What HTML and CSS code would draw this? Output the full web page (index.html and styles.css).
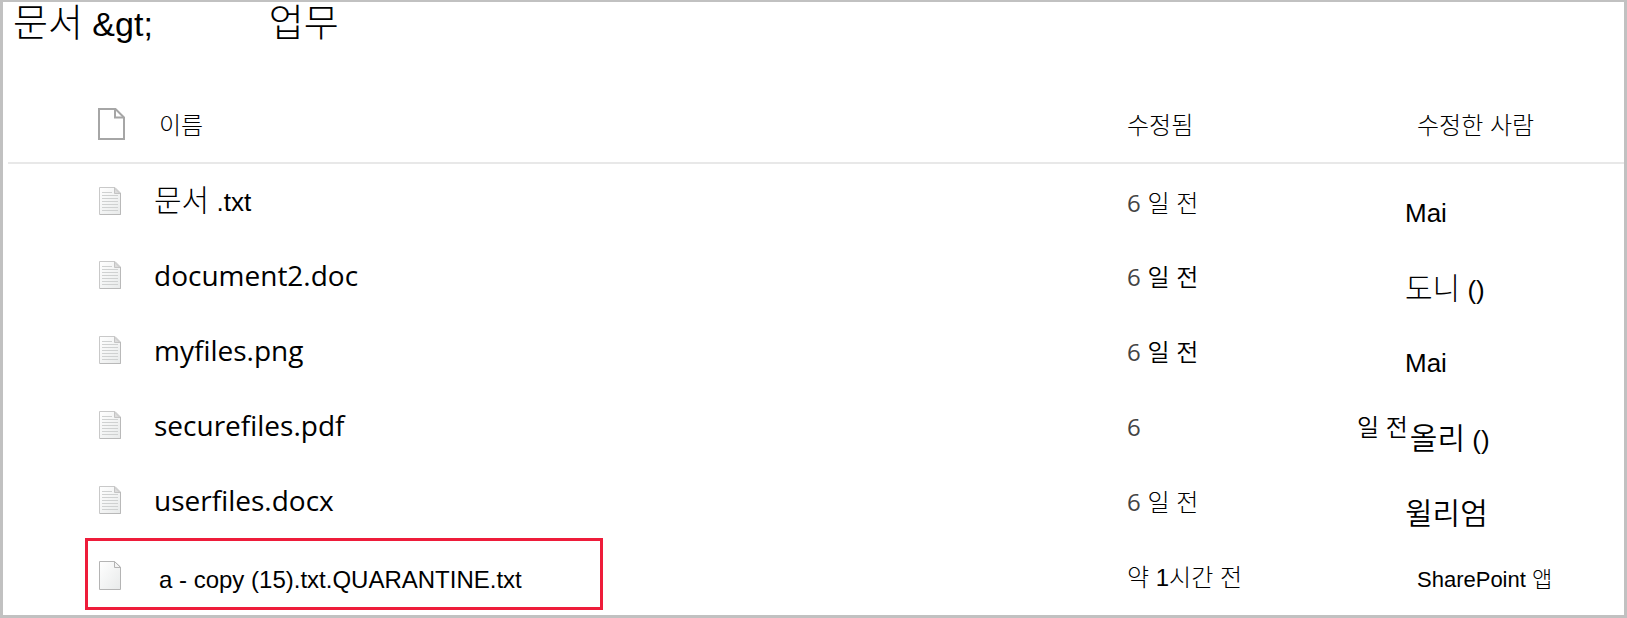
FILE: index.html
```
<!DOCTYPE html>
<html lang="ko">
<head>
    <meta charset="utf-8">
    <meta name="viewport" content="width=device-width, initial-scale=1.0">
    <title>문서</title>
    <link rel="stylesheet" href="styles.css">
</head>
<body>
    <!-- icons shared by the rows -->
    <svg class="sprite" aria-hidden="true">
        <defs>
            <linearGradient id="paper" x1="0" y1="0" x2="1" y2="1">
                <stop offset="0" stop-color="#ffffff"/>
                <stop offset="1" stop-color="#e8eaea"/>
            </linearGradient>
        </defs>
        <symbol id="text-file" viewBox="0 0 22 29">
            <path d="M.5 .5H16L21.500 6V27.500H.5Z" fill="url(#paper)" stroke="#c9c9c9"/>
            <path d="M1 27.500H21.500V6" fill="none" stroke="#b9b9b9"/>
            <path d="M15.500 1V6.500H21Z" fill="#dcdcdc" stroke="#c4c4c4"/>
            <path d="M3 5.500H13M3 8.500H19M3 11.500H19M3 14.500H19M3 17.500H19M3 20.500H19M3 23.500H19" stroke="#cfd1d1"/>
        </symbol>
        <symbol id="blank-file" viewBox="0 0 22 29">
            <path d="M.5 .5H15.500L21.500 6V28.500H.5Z" fill="url(#paper)" stroke="#b4b4b4"/>
            <path d="M15.500 .5V6.500H21.500Z" fill="#f4f4f4" stroke="#b4b4b4"/>
        </symbol>
    </svg>

    <main class="library">
        <h1 class="title"><span><span class="ko">문서</span> &amp;gt;</span><span class="ko">업무</span></h1>

        <table class="files">
            <thead>
                <tr>
                    <th class="icon" scope="col" aria-label="형식">
                        <svg class="type-icon" viewBox="0 0 27 32">
                            <path d="M1 1H17.500L26 9.500V31H1Z" fill="#fff" stroke="#a6a6a6" stroke-width="2"/>
                            <path d="M17 1.500V9.500H25.500" fill="none" stroke="#a6a6a6" stroke-width="2"/>
                        </svg>
                    </th>
                    <th class="name" scope="col">이름</th>
                    <th class="modified" scope="col">수정됨</th>
                    <th class="person" scope="col">수정한 사람</th>
                </tr>
            </thead>
            <tbody>
                <tr>
                    <td class="icon"><svg class="file-icon"><use href="#text-file"/></svg></td>
                    <td class="name"><a href="#"><span class="ko">문서</span> <span class="ext">.txt</span></a></td>
                    <td class="modified"><span class="count">6</span> 일 전</td>
                    <td class="person">Mai</td>
                </tr>
                <tr>
                    <td class="icon"><svg class="file-icon"><use href="#text-file"/></svg></td>
                    <td class="name"><a href="#">document2.doc</a></td>
                    <td class="modified strong"><span class="count">6</span> 일 전</td>
                    <td class="person"><span class="ko">도니</span> ()</td>
                </tr>
                <tr>
                    <td class="icon"><svg class="file-icon"><use href="#text-file"/></svg></td>
                    <td class="name"><a href="#">myfiles.png</a></td>
                    <td class="modified strong"><span class="count">6</span> 일 전</td>
                    <td class="person">Mai</td>
                </tr>
                <tr>
                    <td class="icon"><svg class="file-icon"><use href="#text-file"/></svg></td>
                    <td class="name"><a href="#">securefiles.pdf</a></td>
                    <td class="modified"><span class="count">6</span></td>
                    <td class="person wrapped">
                        <div class="pair"><span class="days">일 전</span><span><span class="ko strong">올리</span> ()</span></div>
                    </td>
                </tr>
                <tr>
                    <td class="icon"><svg class="file-icon"><use href="#text-file"/></svg></td>
                    <td class="name"><a href="#">userfiles.docx</a></td>
                    <td class="modified"><span class="count">6</span> 일 전</td>
                    <td class="person"><span class="ko strong">윌리엄</span></td>
                </tr>
                <tr class="quarantine">
                    <td class="icon"><svg class="file-icon"><use href="#blank-file"/></svg></td>
                    <td class="name"><a href="#">a - copy (15).txt.QUARANTINE.txt</a></td>
                    <td class="modified">약 <span class="digit">1</span>시간 전</td>
                    <td class="person">SharePoint <span class="light">앱</span></td>
                </tr>
            </tbody>
        </table>
    </main>
</body>
</html>
```

FILE: styles.css
```
*,
*::after {
    box-sizing: border-box;
}

body {
    margin: 0;
    background-color: #fff;
    color: #000;
    font-family: "Liberation Sans", "Noto Sans CJK KR", sans-serif;
}

.sprite {
    position: absolute;
    width: 0;
    height: 0;
}

.library {
    min-height: 100vh;
    border: 3px solid #c1c1c1;
    border-top-width: 2px;
}

.title {
    display: flex;
    gap: 116px;
    height: 83px;
    margin: 0;
    padding-left: 10px;
    font-size: 34px;
    font-weight: 300;
    line-height: 36px;
}

.title .ko {
    font-size: 38px;
    line-height: 36px;
}

.files {
    width: calc(100% - 5px);
    margin-left: 5px;
    table-layout: fixed;
    border-collapse: collapse;
}

.files th,
.files td {
    height: 75px;
    padding: 0;
    text-align: left;
    vertical-align: middle;
    white-space: nowrap;
    line-height: 36px;
}

.files th {
    height: 78px;
    padding-top: 4px;
    border-bottom: 2px solid #e8e8e8;
    font-size: 24px;
    font-weight: 300;
}

.files .icon {
    width: 146px;
    padding-left: 91px;
}

.files th.icon {
    padding-top: 0;
    padding-left: 90px;
}

.files th.name {
    padding-left: 5px;
}

.type-icon {
    display: block;
    width: 27px;
    height: 32px;
}

.file-icon {
    display: block;
    width: 22px;
    height: 29px;
}

.name a {
    color: inherit;
    text-decoration: none;
}

.files td.name {
    padding-bottom: 2px;
    font-family: "Open Sans", "Noto Sans CJK KR", sans-serif;
    font-size: 28px;
}

.ko {
    font-family: "Noto Sans CJK KR", sans-serif;
    font-size: 30px;
    font-weight: 300;
    line-height: 36px;
}

.name .ext {
    font-family: "Liberation Sans", sans-serif;
    font-size: 26px;
}

.modified {
    width: 230px;
}

.files td.modified {
    padding-top: 4px;
    font-size: 24px;
    font-weight: 300;
}

.files td.strong,
.ko.strong,
.days {
    font-weight: 350;
}

.modified .count {
    color: #444;
    font-family: "Open Sans", sans-serif;
    font-weight: 500;
}

.person {
    width: 267px;
}

.files th.person {
    padding-left: 60px;
}

.files td.person {
    padding: 24px 0 0 48px;
    font-size: 26px;
}

.files td.wrapped {
    padding-left: 0;
}

.pair {
    display: flex;
    align-items: flex-start;
    gap: 2px;
}

.days {
    font-size: 24px;
    line-height: 20px;
}

.light {
    font-weight: 300;
}

/* red frame around the quarantined file */
.quarantine .icon {
    position: relative;
}

.quarantine .icon::after {
    content: "";
    position: absolute;
    top: 0;
    left: 77px;
    width: 518px;
    height: 72px;
    border: 3px solid #ee1c3a;
    pointer-events: none;
}

.files .quarantine td.name {
    padding: 8px 0 0 5px;
    font-family: "Liberation Sans", sans-serif;
    font-size: 24px;
}

.files .quarantine td.person {
    padding: 8px 0 0 60px;
    font-size: 22px;
}
```
